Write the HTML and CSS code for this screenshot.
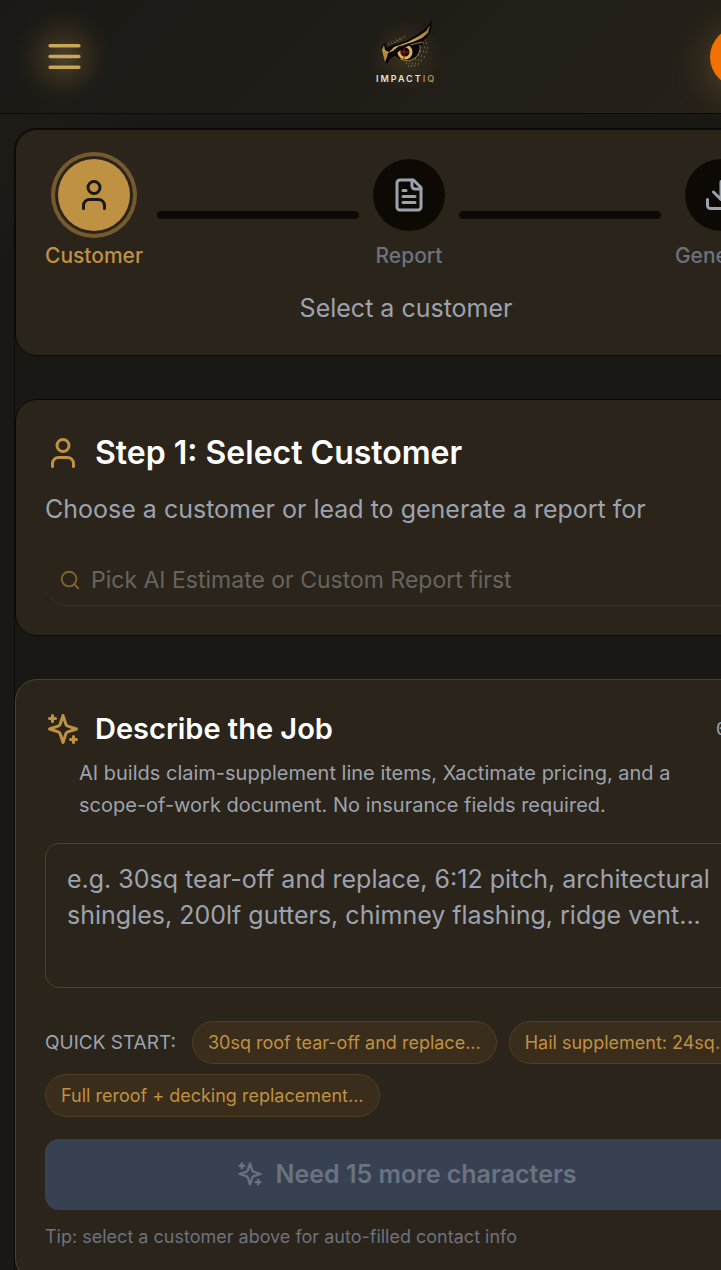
FILE: index.html
```html
<!DOCTYPE html>
<html lang="en">
<head>
    <meta charset="UTF-8">
    <meta name="viewport" content="width=device-width, initial-scale=1.0">
    <title>ImpactIQ - Generate Report</title>
    <link rel="stylesheet" href="styles.css">
</head>
<body>
    <!-- shared icons -->
    <svg class="sprite" aria-hidden="true">
        <symbol id="icon-user" viewBox="0 0 24 24">
            <path d="M19 21v-2a4 4 0 0 0-4-4H9a4 4 0 0 0-4 4v2"/>
            <circle cx="12" cy="7" r="4"/>
        </symbol>
        <symbol id="icon-sparkles" viewBox="0 0 24 24">
            <path d="m12 3-1.912 5.813a2 2 0 0 1-1.275 1.275L3 12l5.813 1.912a2 2 0 0 1 1.275 1.275L12 21l1.912-5.813a2 2 0 0 1 1.275-1.275L21 12l-5.813-1.912a2 2 0 0 1-1.275-1.275L12 3Z"/>
            <path d="M5 3v4M19 17v4M3 5h4M17 19h4"/>
        </symbol>
    </svg>

    <div class="page">
        <header class="topbar">
            <button type="button" class="menu-button" aria-label="Open menu">
                <svg class="icon" viewBox="0 0 24 24"><path d="M4 6h16M4 12h16M4 18h16"/></svg>
            </button>
            <a href="#" class="logo" aria-label="ImpactIQ home">
                <svg viewBox="0 4 72 72">
                    <defs>
                        <linearGradient id="gold" x1="0" y1="1" x2="1" y2="0">
                            <stop offset="0" stop-color="#a67c36"/>
                            <stop offset="0.5" stop-color="#dcb45e"/>
                            <stop offset="1" stop-color="#8a6a2c"/>
                        </linearGradient>
                    </defs>
                    <path class="feathers" d="M18 27l5-2 7-3 6-3M20 29l12-7M49 22l9 1M50 26l9 0M51 30l7 1M50 34l7 1M48 38l7 2M45 42l8 2M36 46l13 1M38 49l7 0"/>
                    <path class="shade" d="M12 29l3-3 2 5 5-3 14-4 12-7 8-6 6-8-1 11-5 8-6 4-8 1-11 5-7 7-4 3-3 5-5-9z"/>
                    <path fill="url(#gold)" d="M12 33l2-5 1 5 4 2 5-5 14-5 11-6 7-5 4-6-2 8-6 5-9 4-14 4-6 5-5 2-1 4-2 5-2-7z"/>
                    <path class="shade" d="M24 38l6-6 9-4 14-2-3 8-4 6-8 4-8-2z"/>
                    <path class="eyelid" d="M40 28l12-3M50 28q1 8-5 13t-15 1"/>
                    <circle cx="35" cy="35" r="6" fill="none" stroke="#dcb461" stroke-width="3"/>
                    <circle cx="34" cy="34" r="3" fill="#180b08"/>
                    <path class="pupil" d="M34 29v13M30 35h9"/>
                    <path class="shade" d="M22 36l9-7 16-5-9 5-10 6z"/>
                    <text x="6" y="65">IMPACT<tspan>IQ</tspan></text>
                </svg>
            </a>
            <button type="button" class="avatar" aria-label="Account"></button>
        </header>

        <main class="content">
            <section class="card progress-card">
                <ol class="steps">
                    <li class="step active">
                        <span class="step-circle"><svg class="icon"><use href="#icon-user"/></svg></span>
                        <span>Customer</span>
                    </li>
                    <li class="step-line" role="presentation"></li>
                    <li class="step">
                        <span class="step-circle">
                            <svg class="icon" viewBox="0 0 24 24">
                                <path d="M15 2H6a2 2 0 0 0-2 2v16a2 2 0 0 0 2 2h12a2 2 0 0 0 2-2V7Z"/>
                                <path d="M14 2v4a2 2 0 0 0 2 2h4M10 9H8M16 13H8M16 17H8"/>
                            </svg>
                        </span>
                        <span>Report</span>
                    </li>
                    <li class="step-line" role="presentation"></li>
                    <li class="step">
                        <span class="step-circle">
                            <svg class="icon" viewBox="0 0 24 24"><path d="M21 15v4a2 2 0 0 1-2 2H5a2 2 0 0 1-2-2v-4M7 10l5 5 5-5M12 15V3"/></svg>
                        </span>
                        <span>Generate</span>
                    </li>
                </ol>
                <p class="progress-text">Select a customer</p>
            </section>

            <section class="card">
                <h2 class="card-title large">
                    <svg class="icon"><use href="#icon-user"/></svg>
                    Step 1: Select Customer
                </h2>
                <p class="card-text">Choose a customer or lead to generate a report for</p>
                <label class="search">
                    <svg class="icon" viewBox="0 0 24 24"><circle cx="11" cy="11" r="8"/><path d="m21 21-4.3-4.3"/></svg>
                    <input type="text" placeholder="Pick AI Estimate or Custom Report first" aria-label="Customer" disabled>
                </label>
            </section>

            <section class="card job-card">
                <div class="job-header">
                    <h2 class="card-title">
                        <svg class="icon"><use href="#icon-sparkles"/></svg>
                        <label for="job">Describe the Job</label>
                    </h2>
                    <span class="counter">0/500</span>
                </div>
                <p class="job-text">AI builds claim-supplement line items, Xactimate pricing, and a scope-of-work document. No insurance fields required.</p>
                <textarea id="job" placeholder="e.g. 30sq tear-off and replace, 6:12 pitch, architectural shingles, 200lf gutters, chimney flashing, ridge vent..."></textarea>
                <div class="quick-start">
                    <span class="quick-label">QUICK START:</span>
                    <button type="button" class="chip">30sq roof tear-off and replace...</button>
                    <button type="button" class="chip">Hail supplement: 24sq...</button>
                    <button type="button" class="chip">Full reroof + decking replacement...</button>
                </div>
                <button type="button" class="submit" disabled>
                    <svg class="icon"><use href="#icon-sparkles"/></svg>
                    Need 15 more characters
                </button>
                <p class="tip">Tip: select a customer above for auto-filled contact info</p>
            </section>
        </main>
    </div>
</body>
</html>
```
FILE: styles.css
```css
* {
    box-sizing: border-box;
}
body {
    margin: 0;
    height: 100vh;
    overflow: hidden;
    background-color: #191814;
    color: #9ca3af;
    font-family: Inter, "Liberation Sans", sans-serif;
    font-size: 25px;
    line-height: 36px;
}
h2, p, ol {
    margin: 0;
    padding: 0;
}
button, input, textarea {
    font: inherit;
}
.sprite {
    display: none;
}
.icon {
    width: 36px;
    height: 36px;
    flex-shrink: 0;
    fill: none;
    stroke: currentColor;
    stroke-width: 2;
    stroke-linecap: round;
    stroke-linejoin: round;
}

/* the layout is wider than the window and runs off its right edge */
.page {
    width: 112.5%;
    background: linear-gradient(135deg, #241f19 0, #191814 200px);
}
.topbar {
    display: grid;
    grid-template-columns: 1fr auto 1fr;
    align-items: center;
    height: 114px;
    padding: 0 14px;
    background: linear-gradient(135deg, #1a1915, #27221a);
    border-bottom: 1px solid #0d0a05;
}
.menu-button {
    display: flex;
    align-items: center;
    justify-content: center;
    width: 100px;
    height: 100px;
    padding: 0;
    border: none;
    background: radial-gradient(closest-side, #4d422a, #332b1d 40%, #211e17 75%, transparent);
    color: #c9a658;
}
.menu-button .icon {
    width: 43px;
    height: 43px;
}
.logo {
    width: 72px;
    height: 72px;
    background: radial-gradient(closest-side, #3a301d, transparent);
}
.logo svg {
    display: block;
}
.logo text {
    font-size: 9px;
    font-weight: 600;
    letter-spacing: 2px;
    fill: #e4e2dc;
}
.logo tspan {
    fill: #b08d48;
}
.logo .shade {
    fill: #080704;
}
.logo .feathers {
    fill: none;
    stroke: #665b47;
    stroke-width: 2;
    stroke-dasharray: 1 2;
}
.logo .eyelid {
    fill: none;
    stroke: #8f784d;
    stroke-width: 1;
}
.logo .pupil {
    stroke: #a51b12;
    stroke-width: 1;
}
.avatar {
    justify-self: end;
    width: 60px;
    height: 60px;
    margin-right: 27px;
    border: none;
    border-radius: 50%;
    background-color: #f27100;
    box-shadow: 0 6px 36px rgba(201, 150, 70, 0.35);
}

.content {
    display: flex;
    flex-direction: column;
    gap: 43px;
    margin: 14px 14px 0;
    border-top: 1px solid #0d0a05;
    border-left: 1px solid #0d0a05;
    border-top-left-radius: 22px;
}
.card {
    padding: 29px;
    background-color: #2b241a;
    border: 1px solid #0d0a05;
    border-radius: 22px;
}
.steps {
    display: flex;
    align-items: center;
    gap: 14px;
    list-style: none;
}
.step {
    display: flex;
    flex-direction: column;
    align-items: center;
    gap: 10px;
    color: #6b7280;
    font-size: 21px;
    font-weight: 500;
    line-height: 30px;
}
.step-circle {
    display: flex;
    align-items: center;
    justify-content: center;
    width: 72px;
    height: 72px;
    border-radius: 50%;
    background-color: #0d0a05;
    color: #9ca3af;
}
.step.active {
    color: #bf9143;
}
.active .step-circle {
    background-color: #bf9143;
    color: #1a1915;
    box-shadow: 0 0 0 3px #2b241a, 0 0 0 7px #755a2e;
}
.step-line {
    flex: 1;
    height: 8px;
    border-radius: 4px;
    background-color: #0d0a05;
}
.progress-text {
    margin-top: 19px;
    text-align: center;
}

.card-title {
    display: flex;
    align-items: center;
    gap: 14px;
    color: #fff;
    font-size: 29px;
    font-weight: 600;
    line-height: 40px;
}
.card-title.large {
    font-size: 32px;
    line-height: 48px;
}
.card-title .icon {
    color: #bf9143;
}
.card-text {
    margin-top: 14px;
}
.search {
    display: flex;
    align-items: center;
    gap: 10px;
    margin-top: 28px;
    padding: 0 14px;
    border-bottom: 1px solid #3d3322;
    border-radius: 22px;
}
.search .icon {
    width: 22px;
    height: 22px;
    color: #80652f;
}
.search input {
    flex: 1;
    height: 50px;
    padding: 0;
    border: none;
    background: none;
    font-size: 23px;
}
.search input::placeholder {
    color: #66645f;
}

.job-card {
    border-color: #513f22;
}
.job-header {
    display: flex;
    align-items: center;
    justify-content: space-between;
}
.counter {
    font-family: "DejaVu Sans Mono", monospace;
    font-size: 17px;
}
.job-text {
    margin-top: 8px;
    padding: 0 34px;
    font-size: 20px;
    line-height: 32px;
}
textarea {
    display: block;
    width: 100%;
    height: 145px;
    margin-top: 22px;
    padding: 17px 21px;
    border: 1px solid #513f22;
    border-radius: 14px;
    background: none;
    color: #fff;
    resize: none;
}
textarea::placeholder {
    color: #9ca3af;
}
.quick-start {
    display: flex;
    flex-wrap: wrap;
    align-items: center;
    gap: 10px 12px;
    margin-top: 33px;
    font-size: 18px;
}
.quick-label {
    margin-right: 4px;
    font-size: 19px;
}
.chip {
    height: 43px;
    padding: 0 15px;
    border: 1px solid #513f22;
    border-radius: 22px;
    background-color: #3a2d1c;
    color: #bf9143;
}
.submit {
    display: flex;
    align-items: center;
    justify-content: center;
    gap: 12px;
    width: 100%;
    height: 71px;
    margin-top: 22px;
    padding: 0 8px 2px;
    border: none;
    border-radius: 14px;
    background-color: #374151;
    color: #6b7280;
    font-weight: 600;
}
.submit .icon {
    width: 28px;
    height: 28px;
}
.tip {
    margin-top: 14px;
    color: #6b7280;
    font-size: 18px;
    line-height: 26px;
}
```
